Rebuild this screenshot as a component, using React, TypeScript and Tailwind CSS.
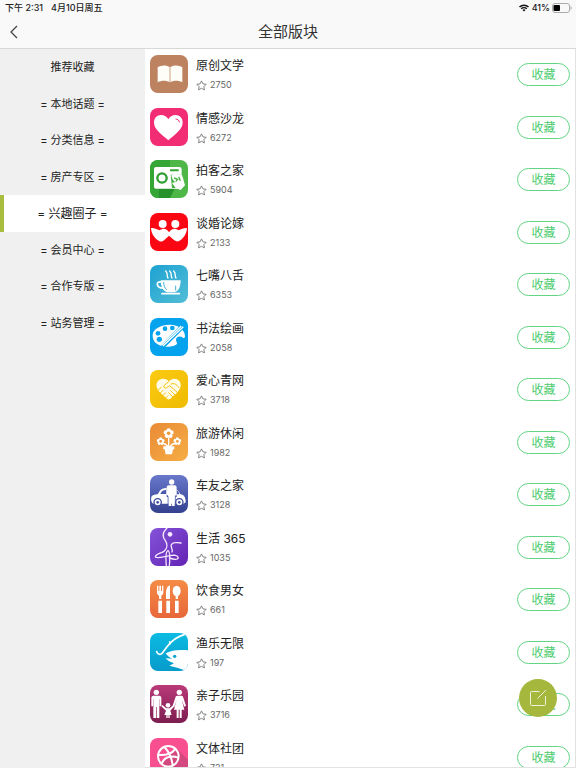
import { useState, type ReactNode } from "react";

interface Board {
  name: string;
  count: number;
  icon: ReactNode;
}

const categories = [
  "推荐收藏",
  "= 本地话题 =",
  "= 分类信息 =",
  "= 房产专区 =",
  "= 兴趣圈子 =",
  "= 会员中心 =",
  "= 合作专版 =",
  "= 站务管理 =",
];

const flower = (x: number, y: number, r: number, hole: string) => (
  <g>
    {[0, 72, 144, 216, 288].map((a) => (
      <circle key={a} cx={x} cy={y - r} r={r * 0.72} fill="#fff" transform={`rotate(${a} ${x} ${y})`} />
    ))}
    <circle cx={x} cy={y} r={r * 0.6} fill={hole} />
  </g>
);

const boards: Board[] = [
  {
    name: "原创文学",
    count: 2750,
    icon: (
      <>
        <rect width="114" height="114" fill="#bd8260" />
        <path d="M23 37c10-7 26-8 36-1v46c-10-6-25-6-36 0z" fill="#fffdf8" />
        <path d="M61 36c10-7 26-6 36 1v45c-11-6-26-6-36 0z" fill="#fffdf8" />
        <path d="M60 38v44" stroke="#ddc5b2" strokeWidth="2" />
      </>
    ),
  },
  {
    name: "情感沙龙",
    count: 6272,
    icon: (
      <>
        <rect width="114" height="114" fill="#f32d74" />
        <path d="M55 97C41 83 12 66 12 44c0-14 9-23 21-23 10 0 18 5 22 13 4-8 12-13 22-13 12 0 21 9 21 23 0 22-29 39-43 53z" fill="#fff" />
        <path d="M78 33c6 0 9 4 10 9" fill="none" stroke="#f32d74" strokeWidth="3" strokeLinecap="round" />
      </>
    ),
  },
  {
    name: "拍客之家",
    count: 5904,
    icon: (
      <>
        <rect width="114" height="114" fill="#4eb748" />
        <path d="M0 0h60v114H0z" fill="#35a535" />
        <path d="M27 86h47l-14 28H27z" fill="#27922b" />
        <path d="M18 21h70a7 7 0 0 1 7 7v52a6 6 0 0 1-6 6H18a6 6 0 0 1-6-6V27a6 6 0 0 1 6-6z" fill="#fff" />
        <path d="M60 28h26v6H60z" fill="#35a535" />
        <path d="M62 44h33v40H66z" fill="#48b044" />
        <circle cx="36" cy="54" r="14" fill="none" stroke="#2d9d30" strokeWidth="7" />
        <path d="M64 46l12-5 20 4 4 13 5 18-13 14-15-6-11-15 9-2-8-11z" fill="#fff" />
        <path d="M72 54l11 4-6 7M86 50l5 12" fill="none" stroke="#48b044" strokeWidth="4" />
      </>
    ),
  },
  {
    name: "谈婚论嫁",
    count: 2133,
    icon: (
      <>
        <rect width="114" height="114" fill="#fb0714" />
        <circle cx="38" cy="33" r="12" fill="#fff" />
        <circle cx="76" cy="33" r="12" fill="#fff" />
        <path d="M3 45c13 0 16 3 25 7 12-8 22-6 29 6 8-12 18-14 29-6 8-4 13-7 25-7-1 17-9 28-20 37-6 5-13 4-19-1L57 68 43 81c-7 6-13 6-19 1C12 73 4 62 3 45z" fill="#fff" />
      </>
    ),
  },
  {
    name: "七嘴八舌",
    count: 6353,
    icon: (
      <>
        <defs>
          <linearGradient id="tea" x1="0" y1="0" x2="1" y2="1">
            <stop offset="0" stopColor="#1da2d2" />
            <stop offset="1" stopColor="#53bdd6" />
          </linearGradient>
        </defs>
        <rect width="114" height="114" fill="url(#tea)" />
        <g fill="none" stroke="#fff" strokeLinecap="round">
          <path d="M47 18c9 8 1 13 7 21M59 18c9 8 1 13 7 21M71 18c9 8 1 13 7 21" strokeWidth="4" />
          <path d="M34 51c-18-4-17 20 10 18" strokeWidth="5" />
          <path d="M36 86h52" strokeWidth="5" />
        </g>
        <path d="M32 46h60c0 19-6 32-18 36H51C39 78 32 65 32 46z" fill="#fff" />
        <path d="M41 51c0 10 3 18 9 23" fill="none" stroke="#3cb0d4" strokeWidth="3" />
        <path d="M77 62v14" stroke="#3cb0d4" strokeWidth="3" />
      </>
    ),
  },
  {
    name: "书法绘画",
    count: 2058,
    icon: (
      <>
        <rect width="114" height="114" fill="#05a3ee" />
        <path d="M58 20c27-1 47 15 47 35 0 4-3 6-6 4-9-6-20-4-21 6-1 6 5 7 3 12-4 6-19 10-34 9C22 84 6 69 8 50c2-18 24-29 50-30z" fill="#fff" />
        <g fill="#05a3ee">
          <circle cx="24" cy="46" r="7" />
          <circle cx="45" cy="32" r="7" />
          <circle cx="67" cy="30" r="7" />
          <circle cx="28" cy="64" r="8" />
        </g>
        <path d="M98 25L37 86" stroke="#05a3ee" strokeWidth="14" />
        <path d="M100 26L39 84M94 24L34 82" stroke="#fff" strokeWidth="4" />
      </>
    ),
  },
  {
    name: "爱心青网",
    count: 3718,
    icon: (
      <>
        <defs>
          <linearGradient id="love" x1="0" y1="0" x2="1" y2="1">
            <stop offset="0" stopColor="#fbca13" />
            <stop offset="1" stopColor="#eebb00" />
          </linearGradient>
        </defs>
        <rect width="114" height="114" fill="url(#love)" />
        <path d="M57 34c9-12 29-10 34 4 4 13-4 24-13 33L61 86c-4 3-8 3-12-1L28 65C18 55 16 40 26 31c9-8 24-6 31 3z" fill="#fffce9" />
        <g fill="none" stroke="#f4c20b" strokeWidth="3" strokeLinecap="round" strokeLinejoin="round">
          <path d="M57 34L42 47c-3 6 4 9 8 6l9-6 25 22" />
          <path d="M24 61l10-9M30 70l9-9M38 77l9-9M46 85l8-8M62 62l13 13M56 68l13 13M63 42c10-4 17 1 23 10" />
        </g>
      </>
    ),
  },
  {
    name: "旅游休闲",
    count: 1982,
    icon: (
      <>
        <defs>
          <linearGradient id="trip" x1="0" y1="0" x2="1" y2="1">
            <stop offset="0" stopColor="#e98b37" />
            <stop offset="1" stopColor="#f6ae43" />
          </linearGradient>
        </defs>
        <rect width="114" height="114" fill="url(#trip)" />
        <path d="M56 43v28M34 60c10 1 16 5 20 12M81 60c-11 1-18 5-22 12" fill="none" stroke="#fff" strokeWidth="4" />
        {flower(56, 31, 9, "#ee9a3d")}
        {flower(32, 55, 7, "#ec923a")}
        {flower(82, 55, 7, "#f09f3f")}
        <path d="M40 70h33v9h-4l-3 15H47l-3-15h-4z" fill="#fff" />
      </>
    ),
  },
  {
    name: "车友之家",
    count: 3128,
    icon: (
      <>
        <defs>
          <linearGradient id="car" x1="0" y1="0" x2="0" y2="1">
            <stop offset="0" stopColor="#6a78cc" />
            <stop offset="1" stopColor="#33418f" />
          </linearGradient>
        </defs>
        <rect width="114" height="114" fill="url(#car)" />
        <path d="M4 65c4-6 12-6 20-8 8-16 13-18 31-18 22 0 30 5 36 19 12 2 16 9 16 24l-6 4H10c-6-3-8-12-6-21z" fill="#fff" />
        <path d="M31 57c5-10 8-12 17-12v12zM80 45c4 2 7 6 8 13h-8z" fill="#4d5bae" />
        <circle cx="23" cy="82" r="11" fill="#fff" stroke="#3d4b9c" strokeWidth="4" />
        <circle cx="88" cy="82" r="11" fill="#fff" stroke="#3d4b9c" strokeWidth="4" />
        <circle cx="23" cy="82" r="4" fill="#3d4b9c" />
        <circle cx="88" cy="82" r="4" fill="#3d4b9c" />
        <path d="M50 38h4v26h2v28h-3V66h-3zM76 38h4v28h-3v26h-3V64h2z" fill="#4755a7" />
        <circle cx="65" cy="21" r="8" fill="#fff" />
        <path d="M56 31h18c4 0 6 3 6 7v23h-5V42h-1v51h-8V64h-2v29h-8V42h-1v19h-5V38c0-4 2-7 6-7z" fill="#fff" />
      </>
    ),
  },
  {
    name: "生活 365",
    count: 1035,
    icon: (
      <>
        <defs>
          <linearGradient id="life" x1="0" y1="0" x2="1" y2="1">
            <stop offset="0" stopColor="#8453d8" />
            <stop offset="1" stopColor="#6424b4" />
          </linearGradient>
        </defs>
        <rect width="114" height="114" fill="url(#life)" />
        <circle cx="60" cy="19" r="7" fill="#f8e9ff" />
        <g fill="none" stroke="#f5e6ff" strokeLinecap="round">
          <path d="M51 0C38 12 35 24 46 38c8 12 5 24-3 31C34 77 18 76 16 87c8 6 30-1 43-4 14-3 25-1 26 7-3 6-16 4-27 0" strokeWidth="4" />
          <path d="M93 45c-10-2-26-2-29 5-3 8 6 14 2 22M49 114c-2-22-2-44 5-46 6 2 6 24 4 46" strokeWidth="4" />
        </g>
      </>
    ),
  },
  {
    name: "饮食男女",
    count: 661,
    icon: (
      <>
        <defs>
          <linearGradient id="food" x1="0" y1="0" x2="0" y2="1">
            <stop offset="0" stopColor="#f48b45" />
            <stop offset="1" stopColor="#e8673a" />
          </linearGradient>
        </defs>
        <rect width="114" height="114" fill="url(#food)" />
        <g fill="#fff">
          <path d="M21 17h4v16h3V17h5v16h3V17h4v20c0 6-3 8-6 10v10h-7V47c-4-2-6-5-6-10z" />
          <path d="M48 57V37c0-10 4-18 12-21v41z" />
          <ellipse cx="80" cy="33" rx="12" ry="16" />
          <path d="M77 45h7v12h-7zM25 62h11v37H25zM49 62h11v37H49zM75 62h11v37H75z" />
        </g>
      </>
    ),
  },
  {
    name: "渔乐无限",
    count: 197,
    icon: (
      <>
        <defs>
          <linearGradient id="fish" x1="0" y1="0" x2="0" y2="1">
            <stop offset="0" stopColor="#0cbbe2" />
            <stop offset="1" stopColor="#069bcb" />
          </linearGradient>
        </defs>
        <rect width="114" height="114" fill="url(#fish)" />
        <path d="M104 4C80 11 64 24 51 41L37 60c-5 7-15 4-17-4" fill="none" stroke="#fff" strokeWidth="5" strokeLinecap="round" />
        <path d="M58 25l4 9" stroke="#fff" strokeWidth="4" />
        <path d="M47 61c16-9 38-12 67-9v60h-10c-14-7-30-9-46-14l14-7c-10-3-20-8-25-15l20 1c-8-3-15-8-20-16z" fill="#fff" />
        <circle cx="74" cy="70" r="5" fill="#08a4cf" />
      </>
    ),
  },
  {
    name: "亲子乐园",
    count: 3716,
    icon: (
      <>
        <defs>
          <linearGradient id="kids" x1="0" y1="0" x2="0" y2="1">
            <stop offset="0" stopColor="#ba3a78" />
            <stop offset="1" stopColor="#7c1d50" />
          </linearGradient>
        </defs>
        <rect width="114" height="114" fill="url(#kids)" />
        <g fill="#fff">
          <circle cx="19" cy="22" r="8" />
          <path d="M10 32h18c4 0 6 3 6 8v24h-5V43h-1v56h-8V66h-2v33h-8V43H9v21H4V40c0-5 2-8 6-8z" />
          <circle cx="88" cy="22" r="8" />
          <path d="M82 32h12c4 0 5 2 6 6l8 24-5 3-8-22 8 31h-8v25h-6V74h-3v25h-6V74h-8l8-31-7 22-5-3 8-24c1-4 2-6 6-6z" />
          <circle cx="54" cy="61" r="7" />
          <path d="M49 70h10l11-10 3 4-12 13 4 13h-6v9h-4v-9h-2v9h-4v-9h-6l5-13-14-13 3-4z" />
        </g>
      </>
    ),
  },
  {
    name: "文体社团",
    count: 721,
    icon: (
      <>
        <rect width="114" height="114" fill="#f84f90" />
        <path d="M79 31l35 34v49H58L34 79z" fill="#d44880" />
        <g fill="none" stroke="#fff" strokeWidth="6">
          <circle cx="55" cy="55" r="31" />
          <path d="M43 27c14 14 22 32 25 54M25 51c20 1 40-3 50-17M35 77c8-20 27-26 50-18" />
        </g>
      </>
    ),
  },
];

function StarIcon() {
  return (
    <svg className="size-[11px] shrink-0" viewBox="0 0 24 24" fill="none" stroke="#777" strokeWidth="2" strokeLinejoin="round">
      <path d="M12 2l3.200 6.400 7 1-5 5 1.200 7.100L12 18.200l-6.400 3.300 1.200-7.100-5-5 7-1z" />
    </svg>
  );
}

function StatusBar() {
  return (
    <div className="flex h-4 items-center justify-between pr-[4px] pl-[5px] text-[9px] font-medium text-[#222]">
      <div className="flex gap-2">
        <span>下午 2:31</span>
        <span>4月10日周五</span>
      </div>
      <div className="flex items-center gap-[2px]">
        <svg className="h-2 w-3" viewBox="0 0 20 16" fill="none" stroke="#111" strokeWidth="3">
          <path d="M1 6c5-5 13-5 18 0M4.500 9.500c3-3 8-3 11 0" />
          <path d="M10 15l-3-3c2-2 4-2 6 0z" fill="#111" stroke="none" />
        </svg>
        <span>41%</span>
        <svg className="h-[10px] w-5" viewBox="0 0 40 20" fill="none">
          <rect x="1" y="1" width="34" height="18" rx="5" stroke="#aaa" strokeWidth="2" />
          <rect x="3" y="4" width="13" height="12" rx="2" fill="#000" />
          <path d="M38 7v6" stroke="#aaa" strokeWidth="2" />
        </svg>
      </div>
    </div>
  );
}

function BoardRow({ board }: { board: Board }) {
  return (
    <li className="flex items-start pt-[6px] odd:h-[53px] even:h-[52px]">
      <svg className="size-[38px] shrink-0 rounded-[8px]" viewBox="0 0 114 114" aria-hidden="true">
        {board.icon}
      </svg>
      <div className="ml-2 flex-1">
        <h2 className="text-[12px] leading-[22px] text-[#222]">{board.name}</h2>
        <p className="flex h-4 items-center gap-[3px] text-[9px] text-[#666]">
          <StarIcon />
          {board.count}
        </p>
      </div>
      <button className="mt-2 h-[23px] w-[53px] cursor-pointer rounded-full border border-[#62d584] text-[12px] leading-5 text-[#4ccb6e]">
        收藏
      </button>
    </li>
  );
}

export default function App() {
  const [active, setActive] = useState(4);

  return (
    <div className="flex h-screen flex-col overflow-hidden bg-white font-['Inter','Noto_Sans_CJK_SC',sans-serif]">
      <header className="shrink-0 border-b border-[#d8d8d8] bg-[#f9f9f9]">
        <StatusBar />
        <div className="grid h-8 grid-cols-[1fr_auto_1fr] items-center">
          <button className="w-6 cursor-pointer pl-[9px]" aria-label="返回">
            <svg className="h-[14px] w-[9px]" viewBox="0 0 9 14" fill="none" stroke="#444" strokeWidth="1.3">
              <path d="M8 1L2 7l6 6" />
            </svg>
          </button>
          <h1 className="text-[15px] leading-5 text-[#333]">全部版块</h1>
        </div>
      </header>

      <div className="flex min-h-0 flex-1">
        {/* Category sidebar */}
        <nav className="flex w-[145px] shrink-0 flex-col bg-[#f0f0f0]">
          {categories.map((label, i) => (
            <button
              key={label}
              onClick={() => setActive(i)}
              className={`shrink-0 cursor-pointer border-l-4 pr-1 text-[#222] odd:h-[37px] even:h-[36px] ${
                i === active ? "border-[#a9bd3e] bg-white text-[12px]" : "border-transparent text-[11px]"
              }`}
            >
              {label}
            </button>
          ))}
        </nav>

        {/* Board list */}
        <main className="min-w-0 flex-1 overflow-y-auto border-r border-b border-[#e2e2e2] pr-[5px] pl-[5px] [scrollbar-width:none]">
          <ul>
            {boards.map((board) => (
              <BoardRow key={board.name} board={board} />
            ))}
          </ul>
        </main>
      </div>

      <button
        className="fixed right-[19px] bottom-[51px] flex size-[38px] cursor-pointer items-center justify-center rounded-full bg-[#a5b83d]"
        aria-label="发帖"
      >
        <svg className="size-[18px]" viewBox="0 0 18 18" fill="none" stroke="#eef2d8" strokeWidth="1">
          <path d="M10.500 2.500H2.500a1 1 0 0 0-1 1v12a1 1 0 0 0 1 1h13a1 1 0 0 0 1-1V7" />
          <path d="M8.500 9.500L17 1" />
        </svg>
      </button>
    </div>
  );
}
